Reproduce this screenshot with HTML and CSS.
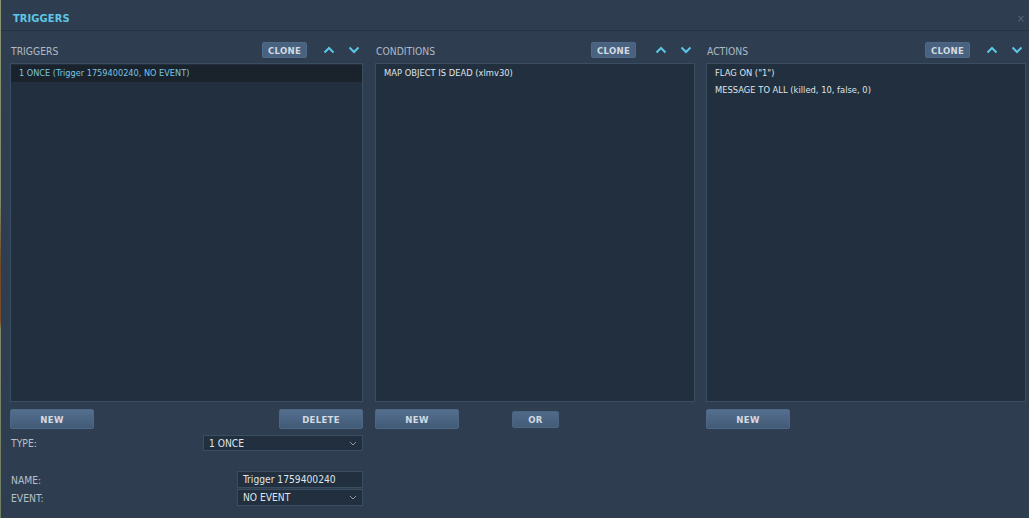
FILE: index.html
```html
<!DOCTYPE html>
<html>
<head>
<meta charset="utf-8">
<link rel="stylesheet" href="styles.css">
</head>
<body>
<div class="screen">
  <div class="mapstrip"></div>
  <div class="window">
    <div class="titlebar">
      <span class="title">TRIGGERS</span>
      <span class="close">×</span>
    </div>
    <div class="cols">
      <div class="col col-triggers">
        <div class="colhead">
          <span class="label">TRIGGERS</span>
          <span class="btn clone">CLONE</span>
          <span class="arrows">
            <svg class="chev" width="12" height="8" viewBox="0 0 12 8"><path d="M1.5 6.5 L6 2 L10.5 6.5"/></svg>
            <svg class="chev" width="12" height="8" viewBox="0 0 12 8"><path d="M1.5 1.5 L6 6 L10.5 1.5"/></svg>
          </span>
        </div>
        <div class="list">
          <div class="row selected">1 ONCE (Trigger 1759400240, NO EVENT)</div>
        </div>
        <div class="btnrow">
          <span class="btn big">NEW</span>
          <span class="btn big">DELETE</span>
        </div>
        <div class="field type">
          <span class="flabel">TYPE:</span>
          <span class="select wide">1 ONCE<svg class="dd" width="8" height="5" viewBox="0 0 8 5"><path d="M1 1 L4 4 L7 1"/></svg></span>
        </div>
        <div class="field name">
          <span class="flabel">NAME:</span>
          <span class="input">Trigger 1759400240</span>
        </div>
        <div class="field event">
          <span class="flabel">EVENT:</span>
          <span class="select">NO EVENT<svg class="dd" width="8" height="5" viewBox="0 0 8 5"><path d="M1 1 L4 4 L7 1"/></svg></span>
        </div>
      </div>
      <div class="col col-conditions">
        <div class="colhead">
          <span class="label">CONDITIONS</span>
          <span class="btn clone">CLONE</span>
          <span class="arrows">
            <svg class="chev" width="12" height="8" viewBox="0 0 12 8"><path d="M1.5 6.5 L6 2 L10.5 6.5"/></svg>
            <svg class="chev" width="12" height="8" viewBox="0 0 12 8"><path d="M1.5 1.5 L6 6 L10.5 1.5"/></svg>
          </span>
        </div>
        <div class="list">
          <div class="row">MAP OBJECT IS DEAD (xlmv30)</div>
        </div>
        <div class="btnrow cond">
          <span class="btn big">NEW</span>
          <span class="btn small">OR</span>
        </div>
      </div>
      <div class="col col-actions">
        <div class="colhead">
          <span class="label">ACTIONS</span>
          <span class="btn clone">CLONE</span>
          <span class="arrows">
            <svg class="chev" width="12" height="8" viewBox="0 0 12 8"><path d="M1.5 6.5 L6 2 L10.5 6.5"/></svg>
            <svg class="chev" width="12" height="8" viewBox="0 0 12 8"><path d="M1.5 1.5 L6 6 L10.5 1.5"/></svg>
          </span>
        </div>
        <div class="list">
          <div class="row">FLAG ON ("1")</div>
          <div class="row">MESSAGE TO ALL (killed, 10, false, 0)</div>
        </div>
        <div class="btnrow">
          <span class="btn big">NEW</span>
        </div>
      </div>
    </div>
  </div>
</div>
</body>
</html>
```
FILE: styles.css
```css
* { box-sizing: border-box; }
html, body {
  margin: 0;
  padding: 0;
  width: 1029px;
  height: 518px;
  overflow: hidden;
  background: #2e3e50;
  font-family: "DejaVu Sans Condensed", "DejaVu Sans", sans-serif;
  font-size: 9px;
  color: #dfe5ea;
}
.screen {
  display: flex;
  width: 1029px;
  height: 518px;
}
.mapstrip {
  width: 1px;
  flex: none;
  background: linear-gradient(to bottom, #8a9670 0px, #7f8a66 200px, #6e4a2a 262px, #7a4c28 320px, #7c8868 330px, #6f7d62 518px);
}
.window {
  flex: 1;
  display: flex;
  flex-direction: column;
  background: #2e3e50;
}
.titlebar {
  height: 31px;
  flex: none;
  display: flex;
  align-items: center;
  justify-content: space-between;
  padding: 0 4px 0 12px;
  border-bottom: 1px solid #243240;
}
.title {
  color: #5ec6e6;
  font-weight: bold;
  font-size: 11px;
  letter-spacing: 0.1px;
  padding-top: 6px;
}
.close {
  color: #55677a;
  font-size: 11px;
  padding-top: 6px;
}
.cols {
  display: flex;
  padding: 0 2px 0 9px;
  gap: 12px;
}
.col {
  display: flex;
  flex-direction: column;
}
.col-triggers { width: 353px; }
.col-conditions { width: 320px; }
.col-actions { width: 320px; margin-left: -1px; }
.colhead {
  display: flex;
  align-items: center;
  height: 16px;
  margin-top: 11px;
}
.label {
  flex: 1;
  color: #aeb9c4;
  font-size: 10.3px;
  padding-top: 2px;
  padding-left: 1px;
}
.btn {
  display: inline-flex;
  align-items: center;
  justify-content: center;
  font-weight: bold;
  color: #d3dae2;
  letter-spacing: 0.3px;
  border-radius: 2px;
  font-size: 9.5px;
}
.clone {
  width: 45px;
  height: 16px;
  background: #48627f;
  border: 1px solid #4e6a88;
}
.col-conditions .clone { margin-right: 3px; }
.arrows {
  display: flex;
  gap: 13px;
  margin-left: 16px;
  width: 40px;
}
.chev {
  fill: none;
  stroke: #5ec6e6;
  stroke-width: 2;
}
.list {
  margin-top: 5px;
  height: 339px;
  background: #222f3e;
  border: 1px solid #3a4e62;
  padding-top: 1px;
}
.row {
  height: 17px;
  line-height: 16px;
  padding-left: 8px;
  color: #dfe5ea;
  font-size: 9.3px;
}
.row.selected {
  background: #1a222c;
  color: #79c6e4;
  font-size: 9.1px;
}
.btnrow {
  display: flex;
  justify-content: space-between;
  margin-top: 7px;
  height: 20px;
}
.btnrow.cond {
  justify-content: flex-start;
  align-items: center;
  gap: 53px;
}
.big {
  width: 84px;
  height: 20px;
  background: linear-gradient(to bottom, #54708f, #415a76);
  border: 1px solid #4d6784;
}
.small {
  width: 47px;
  height: 17px;
  background: linear-gradient(to bottom, #4f6a88, #435c78);
  border: 1px solid #4b6480;
}
.field {
  display: flex;
  justify-content: space-between;
  align-items: center;
  height: 17px;
}
.field.type { margin-top: 6px; height: 16px; }
.field.name { margin-top: 20px; }
.field.event { margin-top: 1px; }
.flabel {
  color: #b6c0ca;
  padding-left: 1px;
  font-size: 10.3px;
}
.select, .input {
  display: flex;
  align-items: center;
  justify-content: space-between;
  height: 100%;
  width: 126px;
  background: #222f3e;
  border: 1px solid #3a4e62;
  padding: 0 5px 0 5px;
  color: #dfe5ea;
  font-size: 10.2px;
}
.select.wide { width: 160px; }
.dd {
  fill: none;
  stroke: #8796a6;
  stroke-width: 1;
}
```
